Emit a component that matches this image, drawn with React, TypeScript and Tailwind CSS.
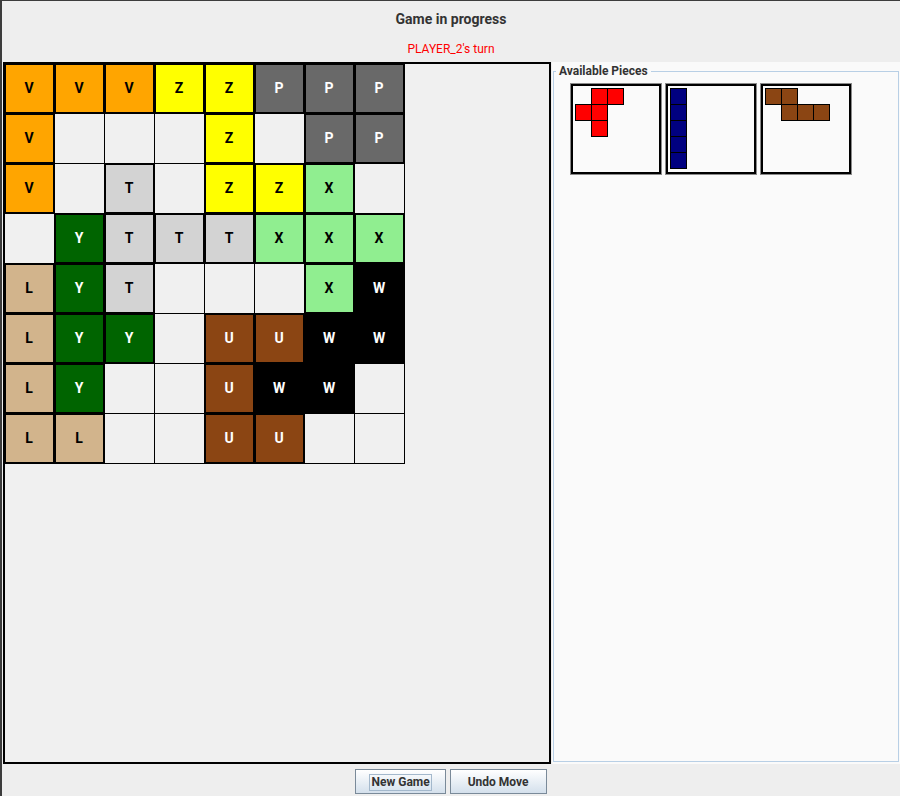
const BOARD = [
  "VVVZZPPP",
  "V...Z.PP",
  "V.T.ZZX.",
  ".YTTTXXX",
  "LYT...XW",
  "LYY.UUWW",
  "LY..UWW.",
  "LL..UU..",
];

// colours of the placed pieces, by letter
const CELL_STYLE: Record<string, string> = {
  V: "bg-[#ffa500] text-black",
  Z: "bg-[#ffff00] text-black",
  P: "bg-[#696969] text-white",
  T: "bg-[#d3d3d3] text-black",
  X: "bg-[#90ee90] text-black",
  Y: "bg-[#006400] text-white",
  L: "bg-[#d2b48c] text-black",
  U: "bg-[#8b4513] text-white",
  W: "bg-[#000000] text-white",
};

const PIECES = [
  { name: "F", color: "#ff0000", cells: [[1, 0], [2, 0], [0, 1], [1, 1], [1, 2]] },
  { name: "I", color: "#000080", cells: [[0, 0], [0, 1], [0, 2], [0, 3], [0, 4]] },
  { name: "N", color: "#8b4513", cells: [[0, 0], [1, 0], [1, 1], [2, 1], [3, 1]] },
];

const UNIT = 16;

function PiecePreview({ color, cells }: { color: string; cells: number[][] }) {
  const cols = Math.max(...cells.map(c => c[0])) + 1;
  const rows = Math.max(...cells.map(c => c[1])) + 1;
  return (
    <svg width={cols * UNIT + 1} height={rows * UNIT + 1} className="block">
      {cells.map(([c, r]) => (
        <rect
          key={`${c}-${r}`}
          x={c * UNIT + 0.5}
          y={r * UNIT + 0.5}
          width={UNIT}
          height={UNIT}
          fill={color}
          stroke="#000"
          strokeWidth={1}
        />
      ))}
    </svg>
  );
}

function BoardCell({ value }: { value: string }) {
  if (value === ".") {
    return <div className="w-[50px] h-[50px] box-border border-r border-b border-black bg-[#f0f0f0]" />;
  }
  return (
    <div
      className={`w-[50px] h-[50px] box-border border-t border-l border-r-2 border-b-2 border-black flex items-center justify-center pr-px text-[14px] font-bold ${CELL_STYLE[value]}`}
    >
      {value}
    </div>
  );
}

export default function App() {
  return (
    <div className="w-[900px] h-[796px] overflow-hidden bg-[#eeeeee] border-l-2 border-t border-[#3c3c3c] flex flex-col font-[Roboto,sans-serif] text-[#333333]">
      <header className="h-[61px] flex flex-col items-center">
        <h1 className="mt-[10px] text-[14px] leading-[17px] font-bold text-[#333333]">Game in progress</h1>
        <p className="mt-[14px] text-[12px] leading-[14px] text-[#ff0000]">PLAYER_2's turn</p>
      </header>

      <main className="flex h-[702px]">
        <div className="ml-px w-[548px] h-[702px] border-2 border-black bg-[#f0f0f0]">
          <div className="grid grid-cols-[repeat(8,50px)] w-fit">
            {BOARD.map((row, r) =>
              row.split("").map((v, c) => <BoardCell key={`${r}-${c}`} value={v} />)
            )}
          </div>
        </div>

        <aside className="ml-px flex-1 bg-[#fafafa] pl-px pr-px pt-px pb-[2px]">
          <fieldset className="h-full border border-[#b8cfe5]">
            <legend className="ml-[2px] px-[3px] text-[12px] leading-[16px] font-bold text-[#333333]">
              Available Pieces
            </legend>
            <div className="flex gap-[5px] pl-[17px] pt-[5px]">
              {PIECES.map(p => (
                <div
                  key={p.name}
                  className="w-[90px] h-[90px] box-border border-2 border-black shadow-[0_0_0_1px_#8a8a8a] bg-[#fafafa] p-[2px]"
                >
                  <PiecePreview color={p.color} cells={p.cells} />
                </div>
              ))}
            </div>
          </fieldset>
        </aside>
      </main>

      <footer className="h-[32px] flex justify-center gap-[4px] pt-[5px]">
        <button className="h-[25px] px-[13px] border border-[#7a8a99] bg-gradient-to-b from-white to-[#d4e0ec] text-[12px] font-bold text-[#333333]">
          <span className="border border-[#a3b8cc] px-px leading-[15px] inline-block">New Game</span>
        </button>
        <button className="h-[25px] px-[17px] border border-[#7a8a99] bg-gradient-to-b from-white to-[#d4e0ec] text-[12px] font-bold text-[#333333]">
          Undo Move
        </button>
      </footer>
    </div>
  );
}
